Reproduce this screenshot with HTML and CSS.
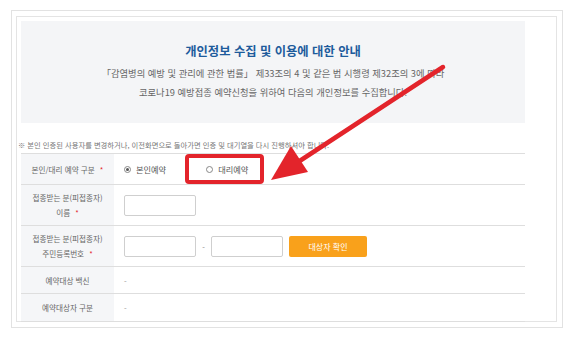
FILE: index.html
```html
<!DOCTYPE html>
<html lang="ko">
<head>
<meta charset="utf-8">
<link rel="stylesheet" href="styles.css">
</head>
<body>
<div class="page">
  <div class="frame">
    <div class="inner">
      <div class="notice">
        <h1 class="notice-title">개인정보 수집 및 이용에 대한 안내</h1>
        <p class="notice-text">「감염병의 예방 및 관리에 관한 법률」 제33조의 4 및 같은 법 시행령 제32조의 3에 따라<br>코로나19 예방접종 예약신청을 위하여 다음의 개인정보를 수집합니다.</p>
      </div>
      <p class="hint">※ 본인 인증된 사용자를 변경하거나, 이전화면으로 돌아가면 인증 및 대기열을 다시 진행하셔야 합니다.</p>
      <div class="form">
        <div class="row row-radio">
          <div class="label"><span>본인/대리 예약 구분 <span class="req">*</span></span></div>
          <div class="value">
            <label class="radio"><span class="dot checked"></span>본인예약</label>
            <label class="radio second"><span class="dot"></span>대리예약</label>
          </div>
        </div>
        <div class="row row-tall">
          <div class="label"><span>접종받는 분(피접종자)<br>이름 <span class="req">*</span></span></div>
          <div class="value"><span class="input"></span></div>
        </div>
        <div class="row row-tall">
          <div class="label"><span>접종받는 분(피접종자)<br>주민등록번호 <span class="req">*</span></span></div>
          <div class="value">
            <span class="input"></span>
            <span class="dash">-</span>
            <span class="input"></span>
            <span class="btn">대상자 확인</span>
          </div>
        </div>
        <div class="row row-short">
          <div class="label"><span>예약대상 백신</span></div>
          <div class="value muted">-</div>
        </div>
        <div class="row row-short last">
          <div class="label"><span>예약대상자 구분</span></div>
          <div class="value muted">-</div>
        </div>
      </div>
    </div>
  </div>
  <svg class="annot" width="574" height="339" viewBox="0 0 574 339">
    <rect x="187" y="156" width="75" height="26" rx="2" fill="none" stroke="#e3242b" stroke-width="4"/>
    <line x1="443" y1="67" x2="292" y2="166" stroke="#e3242b" stroke-width="4.5" stroke-linecap="round"/>
    <polygon points="271,180 291,146 308,172" fill="#e3242b"/>
  </svg>
</div>
</body>
</html>
```

FILE: styles.css
```css
* { box-sizing: border-box; }
html, body { margin: 0; background: #fff; }
body {
  font-family: "Noto Sans CJK KR", "Noto Sans", sans-serif;
  color: #555;
  width: 574px;
  height: 339px;
  overflow: hidden;
}
.page {
  position: relative;
  width: 574px;
  height: 339px;
  padding: 10px 0 0 11px;
}
.frame {
  position: relative;
  width: 552px;
  height: 318px;
  border: 1px solid #e2e2e2;
  background: #fff;
  padding: 5px 6px 5px 4px;
}
.frame::before,
.frame::after {
  content: "";
  position: absolute;
  z-index: -1;
  filter: blur(1.5px);
}
.frame::before {
  top: -5px;
  left: -5px;
  width: 120px;
  height: 90px;
  background: radial-gradient(ellipse 120px 90px at 5px 5px, rgba(0,0,0,0.6), rgba(0,0,0,0.25) 45%, rgba(0,0,0,0) 100%);
}
.frame::after {
  bottom: -5px;
  right: -5px;
  width: 120px;
  height: 90px;
  background: radial-gradient(ellipse 120px 90px at 115px 85px, rgba(0,0,0,0.6), rgba(0,0,0,0.25) 45%, rgba(0,0,0,0) 100%);
}
.inner {
  width: 541px;
  height: 306px;
  border: 1px solid #e4e4e4;
  padding: 4px 0 0 4px;
}
.notice {
  width: 504px;
  height: 102px;
  background: #f4f5f7;
  text-align: center;
  padding-top: 21px;
}
.notice-title {
  margin: 0;
  font-size: 12.3px;
  line-height: 18px;
  font-weight: 700;
  color: #1d5b9c;
}
.notice-text {
  margin: 3.5px 0 0;
  font-size: 9.3px;
  line-height: 19.5px;
  color: #666;
}
.hint {
  margin: 16px 0 0 -3px;
  font-size: 7.3px;
  line-height: 12px;
  color: #777;
  white-space: nowrap;
}
.form {
  width: 504px;
  margin-top: 2px;
}
.row {
  display: flex;
  border-top: 1px solid #dedede;
  font-size: 7.6px;
}
.row.last { border-bottom: 1px solid #dedede; }
.row-radio { height: 31px; }
.row-tall { height: 41px; }
.row-short { height: 27px; }
.row-short.last { height: 29px; }
.label {
  width: 93px;
  flex: none;
  background: #f5f6f8;
  display: flex;
  align-items: center;
  justify-content: center;
  text-align: center;
  line-height: 15px;
  color: #666;
}
.req { color: #e3242b; margin-left: 3px; }
.value {
  flex: 1;
  display: flex;
  align-items: center;
  padding-left: 10px;
  color: #666;
}
.value.muted { color: #999; }
.radio {
  display: flex;
  align-items: center;
  gap: 5px;
  font-size: 8.2px;
  color: #555;
}
.radio.second { margin-left: 40px; }
.dot {
  width: 7px;
  height: 7px;
  border: 1px solid #888;
  border-radius: 50%;
  display: inline-flex;
  align-items: center;
  justify-content: center;
}
.dot.checked::after {
  content: "";
  width: 3px;
  height: 3px;
  border-radius: 50%;
  background: #555;
}
.input {
  width: 72px;
  height: 21px;
  border: 1px solid #cfcfcf;
  border-radius: 2px;
  background: #fff;
}
.dash {
  width: 15px;
  text-align: center;
  color: #888;
}
.btn {
  margin-left: 6px;
  width: 78px;
  height: 21px;
  background: #f9a11b;
  border-radius: 2px;
  color: #fff;
  font-size: 8px;
  display: flex;
  align-items: center;
  justify-content: center;
}
.annot {
  position: absolute;
  top: 0;
  left: 0;
  pointer-events: none;
}
```
